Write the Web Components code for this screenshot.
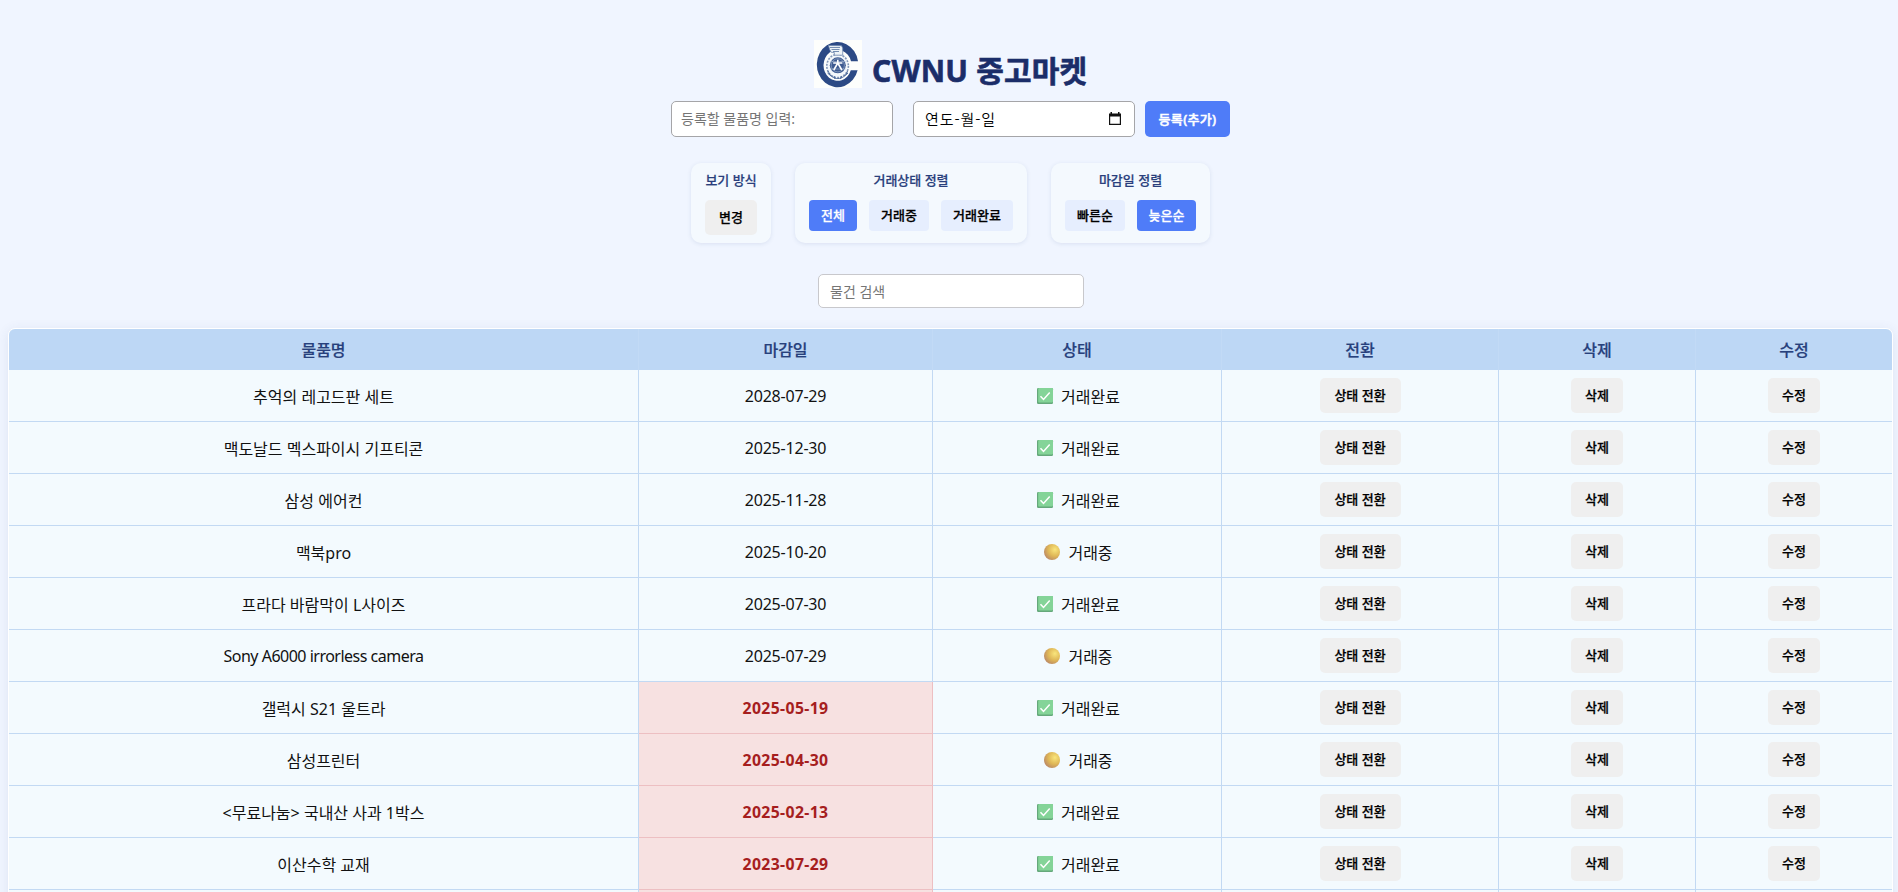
<!DOCTYPE html>
<html lang="ko">
<head>
<meta charset="utf-8">
<title>CWNU 중고마켓</title>
<style>
html{height:100%;overflow:hidden}
body{margin:0;height:100%;overflow:hidden;background:#f0f5ff;color:#111;font-family:"Noto Sans","Noto Sans CJK KR",sans-serif;font-size:16px}
</style>
</head>
<body>
<market-app></market-app>
<script>
const define=(name,html,setup)=>customElements.define(name,class extends HTMLElement{
  connectedCallback(){
    if(this.shadowRoot)return;
    const t=document.createElement('template');
    t.innerHTML=html;
    const root=this.attachShadow({mode:'open'});
    root.append(t.content.cloneNode(true));
    if(setup)setup(this,root);
  }
});

define('school-logo',`<style>:host{display:block;width:48px;height:48px}svg{display:block}</style>
<svg width="48" height="48" viewBox="0 0 48 48">
<rect width="48" height="48" fill="#fdfefc"/>
<path d="M44 21.2A20.7 22.6 0 1 0 43.6 30.2L36.8 30.2A14 15.5 0 1 1 37 21.2Z" fill="#2c4a85"/>
<ellipse cx="23.6" cy="25" rx="11" ry="12.8" fill="#f4f8fb"/>
<ellipse cx="23.6" cy="26" rx="10.8" ry="11.6" fill="none" stroke="#8398b8" stroke-width="1.6" stroke-dasharray="2 1.2"/>
<circle cx="23.8" cy="25.3" r="8" fill="#3d5a90"/>
<g fill="none" stroke="#b9c9de" stroke-width=".5"><circle cx="23.8" cy="25.3" r="6.6"/><path d="M16 21.500h16M16 29h16"/></g>
<path d="M19.200 23h9.200M23.800 19.800v3.200l-4 7M23.800 23l4 7" stroke="#fff" stroke-width="1.600" fill="none"/>
<path d="M14.500 5.500l13 .2 1.200 2.300v7.200h-8.500l.2-2.600-3.400-.4-1.400-3z" fill="#eef4f8" stroke="#6f88ad" stroke-width=".8"/>
<path d="M16 7.500h10M17.500 9.500h8M19 11.500h6" stroke="#5573a0" stroke-width=".8"/>
<path d="M14 31c2 5 5.500 7.500 9.800 7.500S32 36 33.500 31M13.500 33l3.500 3M34 33l-3.500 3M20 36l1 3M27.500 36l-1 3" stroke="#4d6a9b" stroke-width="1" fill="none"/>
</svg>`);

define('market-title',`<style>
:host{display:flex;height:48px;gap:10px}
h1{margin:0;white-space:nowrap;color:#1b2d69;font-size:30px;line-height:61px;height:48px;font-weight:700;letter-spacing:.2px;-webkit-text-stroke:.6px currentColor}
</style><school-logo></school-logo><h1><slot></slot></h1>`);

define('text-field',`<style>
:host{display:block;box-sizing:border-box;border:1px solid #a5a5a8;border-radius:5px;background:#fff;color:#757575;font-size:14px;white-space:nowrap}
div{display:flex;align-items:center;height:100%;padding:0 9px 2px;box-sizing:border-box}
:host([date]) div{color:#000;font-family:"Noto Sans CJK KR",sans-serif;font-size:15px;letter-spacing:.9px;padding:0 13px 2px 11px;justify-content:space-between;font-weight:350}
:host([search]) div{padding:0 12px 1px 11px}
svg{display:none}
:host([date]) svg{display:block;position:relative;top:1px}
</style><div><span><slot></slot></span><svg width="12" height="14" viewBox="0 0 12 14"><path d="M0 1.500h1.500V0H3v1.500h6V0h1.500v1.500H12V13H0zM1.200 4.500v7.300h9.600V4.500z" fill="#111" fill-rule="evenodd"/></svg></div>`);

define('market-button',`<style>
:host{display:block;flex:none}
button{display:block;width:100%;height:var(--h,35px);border:0;border-radius:5px;background:#efefef;color:#000;font:500 13px/17px "Noto Sans","Noto Sans CJK KR",sans-serif;padding:0;white-space:nowrap;-webkit-text-stroke:.25px currentColor}
:host([soft]) button{background:#e6eefe;--h:31px;border-radius:4px}
:host([primary]) button{background:#4f7cf8;color:#fff;letter-spacing:.3px;-webkit-text-stroke:.5px currentColor}
:host([on]) button{background:#4f7cf8;color:#fff;--h:31px;border-radius:4px}
</style><button><slot></slot></button>`);

define('control-group',`<style>
:host{display:block;box-sizing:border-box;height:80px;padding:0 14px;border-radius:10px;background:#f4f9fe;box-shadow:0 1px 4px rgba(60,80,140,.12)}
.label{height:37px;line-height:34px;text-align:center;color:#2a3f7c;font-size:13px;font-weight:500;-webkit-text-stroke:.2px currentColor;white-space:nowrap}
.row{display:flex;gap:12px}
</style><div class="label"></div><div class="row"><slot></slot></div>`,
(el,root)=>{root.querySelector('.label').textContent=el.getAttribute('label')});

define('state-icon',`<style>:host{display:inline-block;width:17px;height:16px}svg{display:none}:host([kind=done]) .d,:host([kind=open]) .o{display:block}</style>
<svg class="d" width="17" height="16" viewBox="0 0 17 16"><rect x="0" y="0" width="16" height="16" rx="1.200" fill="#65a87b"/><rect x="1.200" y="0" width="14.800" height="14.600" rx="1" fill="#84d498"/><path d="M3.500 8.300l3 3.200 6.200-7" fill="none" stroke="#fff" stroke-width="1.500"/></svg>
<svg class="o" width="17" height="16" viewBox="0 0 17 16"><defs><radialGradient id="g" cx=".68" cy=".35" r=".75"><stop offset="0" stop-color="#f9e57c"/><stop offset=".55" stop-color="#dfb757"/><stop offset="1" stop-color="#b98766"/></radialGradient></defs><circle cx="8" cy="8" r="8" fill="url(#g)"/></svg>`);

const cols='630px 294px 289px 277px 197px 1fr';
define('table-head',`<style>
:host{display:grid;grid-template-columns:${cols};height:41px;background:#bdd7f5}
div{display:flex;align-items:center;justify-content:center;box-sizing:border-box;padding-bottom:2px;color:#27407c;font-weight:500;font-size:16px;border-right:1px solid #c2daf6;-webkit-text-stroke:.2px currentColor}
div:last-child{border:0}
</style>`,(el,root)=>{for(const t of el.getAttribute('labels').split(',')){const d=document.createElement('div');d.textContent=t;root.append(d)}});

define('item-row',`<style>
:host{display:grid;grid-template-columns:${cols};height:52px}
.c{display:flex;align-items:center;justify-content:center;box-sizing:border-box;border-right:1px solid #c2d9f3;border-bottom:1px solid #c2d9f3;white-space:nowrap}
.c:last-child{border-right:0}
.name{padding-top:1px;letter-spacing:var(--track,0)}
.date{letter-spacing:-.2px;padding-top:1px}
:host([late]) .date{background:#f7e1e1;border-color:#edbfc2;color:#a61e1e;font-weight:700;letter-spacing:.35px;font-size:15.800px}
.state{gap:7px;padding:1px 0 0 3px}
:host([blank]) .c>*{display:none}
</style>
<div class="c name"><slot></slot></div><div class="c date"></div><div class="c state"><state-icon></state-icon><span></span></div>
<div class="c"><market-button style="width:81px">상태 전환</market-button></div>
<div class="c"><market-button style="width:52px">삭제</market-button></div>
<div class="c"><market-button style="width:52px">수정</market-button></div>`,
(el,root)=>{
  const done=el.hasAttribute('done');
  root.querySelector('.date').textContent=el.getAttribute('date');
  root.querySelector('state-icon').setAttribute('kind',done?'done':'open');
  if(el.hasAttribute('blank')){
    for(const c of root.querySelectorAll('.c'))c.replaceChildren();
    return;
  }
  root.querySelector('.state span').textContent=done?'거래완료':'거래중';
});

define('item-table',`<style>
:host{display:block;box-sizing:border-box;width:1885px;border:1px solid #fff;border-radius:7px;overflow:hidden;background:#f3fafe;box-shadow:0 2px 12px rgba(60,80,140,.1)}
</style><table-head labels="물품명,마감일,상태,전환,삭제,수정"></table-head><slot></slot>`);

define('market-app',`<style>
:host{display:block;box-sizing:border-box;height:100vh;overflow:hidden;padding:40px 0 0 8px}
.bar{display:flex;margin:13px 0 0 663px;height:36px}
.groups{display:flex;gap:24px;margin:26px 0 0 683px}
.search{width:266px;height:34px;margin:31px 0 20px 810px;border-color:#c8c8cc}
market-title{margin-left:806px}
</style>
<market-title>CWNU 중고마켓</market-title>
<div class="bar">
<text-field style="width:222px">등록할 물품명 입력:</text-field>
<text-field date style="width:222px;margin-left:20px">연도-월-일</text-field>
<market-button primary style="width:85px;margin-left:10px;--h:36px">등록(추가)</market-button>
</div>
<div class="groups">
<control-group label="보기 방식"><market-button style="width:52px">변경</market-button></control-group>
<control-group label="거래상태 정렬"><market-button on style="width:48px">전체</market-button><market-button soft style="width:60px">거래중</market-button><market-button soft style="width:72px">거래완료</market-button></control-group>
<control-group label="마감일 정렬"><market-button soft style="width:60px">빠른순</market-button><market-button on style="width:59px">늦은순</market-button></control-group>
</div>
<text-field search class="search">물건 검색</text-field>
<item-table>
<item-row date="2028-07-29" done>추억의 레고드판 세트</item-row>
<item-row date="2025-12-30" done>맥도날드 멕스파이시 기프티콘</item-row>
<item-row date="2025-11-28" done>삼성 에어컨</item-row>
<item-row date="2025-10-20">맥북pro</item-row>
<item-row date="2025-07-30" done>프라다 바람막이 L사이즈</item-row>
<item-row date="2025-07-29" style="--track:-.5px">Sony A6000 irrorless camera</item-row>
<item-row date="2025-05-19" late done>갤럭시 S21 울트라</item-row>
<item-row date="2025-04-30" late>삼성프린터</item-row>
<item-row date="2025-02-13" late done>&lt;무료나눔&gt; 국내산 사과 1박스</item-row>
<item-row date="2023-07-29" late done>이산수학 교재</item-row>
<item-row date="" late blank></item-row>
</item-table>`);
</script>
</body>
</html>
